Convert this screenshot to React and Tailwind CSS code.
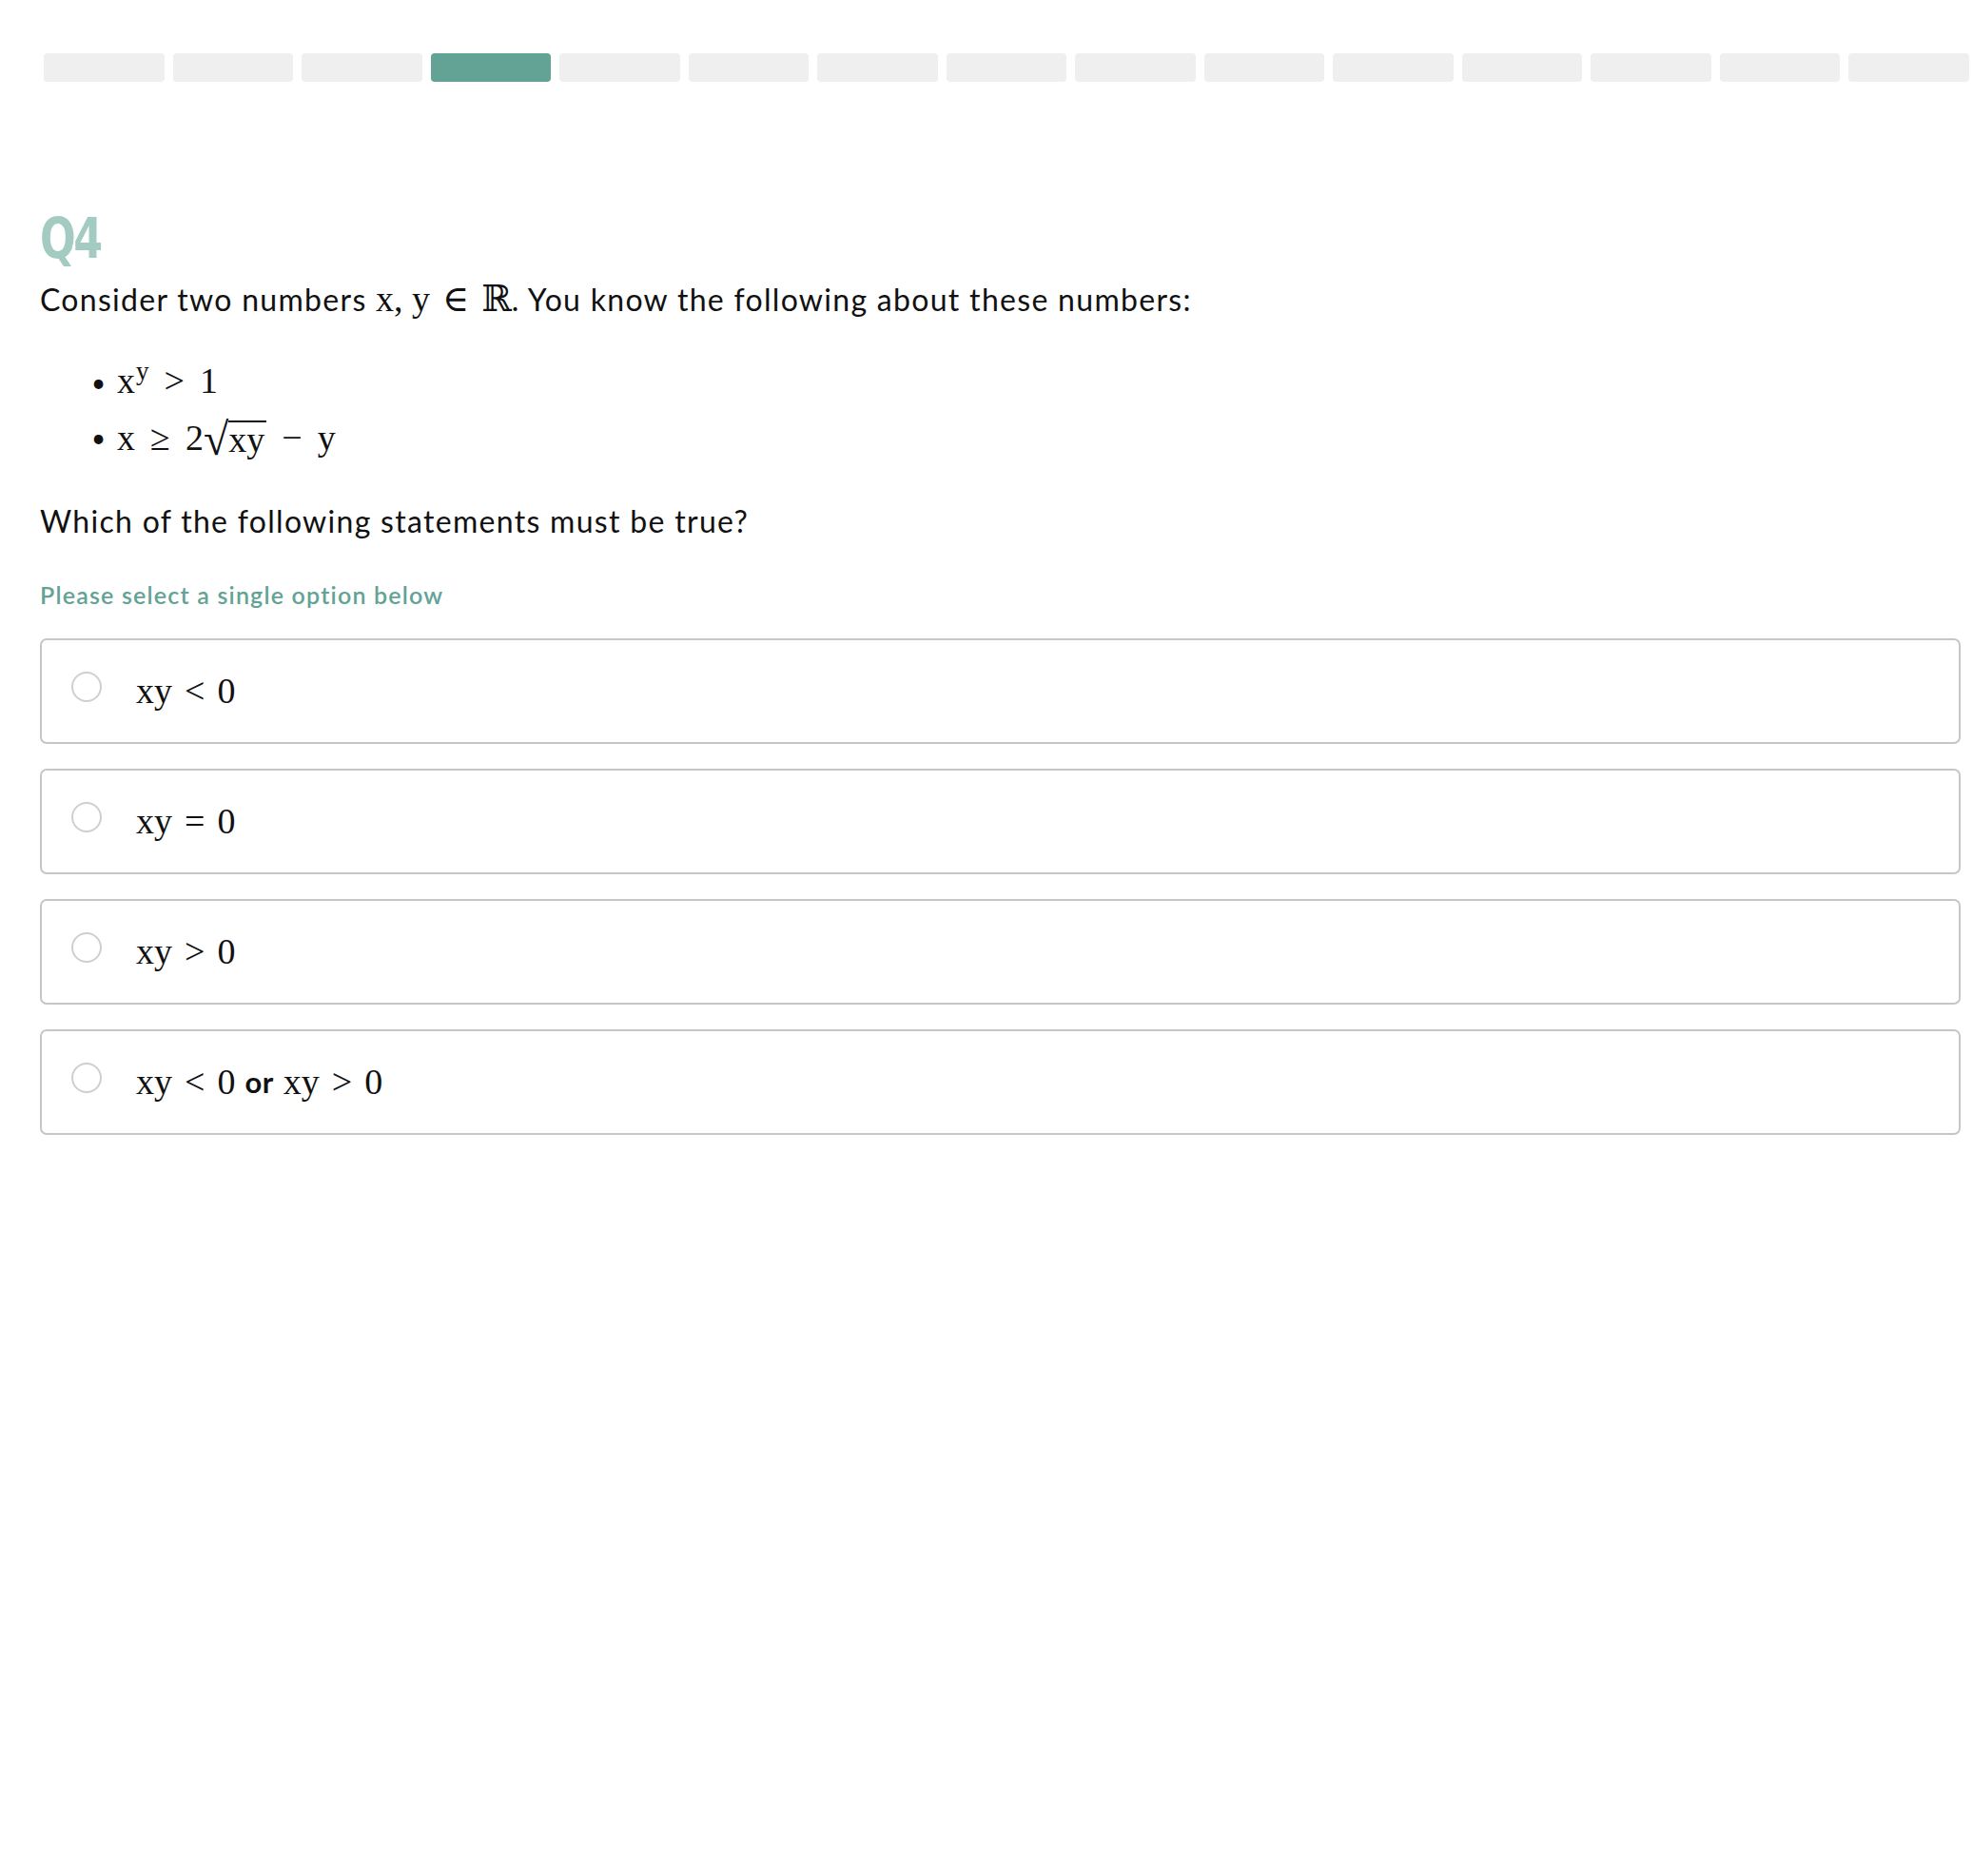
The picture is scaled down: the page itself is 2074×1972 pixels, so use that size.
import React, { useState } from 'react';

const TOTAL_STEPS = 15;
const CURRENT_STEP = 3;

const sans = { fontFamily: 'Lato, "Noto Sans", sans-serif' };

// KaTeX-ish inline math, roman letters in a serif face
function M({ children, className = '' }) {
  return (
    <span className={`font-['Liberation_Serif','DejaVu_Serif',serif] text-[38px] tracking-normal ${className}`}>
      {children}
    </span>
  );
}

function Rel({ children, wide }) {
  return <span className={wide ? 'mx-[16px]' : 'mx-[13px]'}>{children}</span>;
}

const options = [
  { id: 'a', label: <M>xy<Rel>&lt;</Rel>0</M> },
  { id: 'b', label: <M>xy<Rel>=</Rel>0</M> },
  { id: 'c', label: <M>xy<Rel>&gt;</Rel>0</M> },
  {
    id: 'd',
    label: (
      <>
        <M>xy<Rel>&lt;</Rel>0</M>
        <span className="mx-[10px] text-[31px] font-bold tracking-[0.5px]">or</span>
        <M>xy<Rel>&gt;</Rel>0</M>
      </>
    ),
  },
];

export default function App() {
  const [selected, setSelected] = useState(null);

  return (
    <div className="min-h-screen bg-white text-[#111]" style={sans}>
      {/* Progress */}
      <div className="flex gap-[9px] pt-[56px] pl-[46px] pr-[4px]">
        {Array.from({ length: TOTAL_STEPS }).map((_, i) => (
          <div
            key={i}
            className={`h-[30px] flex-1 rounded-[4px] ${i === CURRENT_STEP ? 'bg-[#62a396]' : 'bg-[#efefef]'}`}
          />
        ))}
      </div>

      <div className="pl-[42px] pr-[13px]">
        {/* Question number */}
        <h1 className="mt-[130px] font-['DejaVu_Sans_Condensed','DejaVu_Sans',sans-serif] text-[58px] font-black leading-[70px] tracking-[-3px] text-[#a3cbc2]">
          <span className="inline-block origin-left scale-x-[0.85]">Q4</span>
        </h1>

        {/* Question body */}
        <p className="mt-[4px] text-[32px] leading-[48px] tracking-[1.3px]">
          Consider two numbers <M>x, y<Rel>∈</Rel>ℝ</M>. You know the following about these numbers:
        </p>

        <ul className="mt-[39px] pl-[54px] space-y-[10px]">
          <li className="flex h-[48px] items-center gap-[12px] leading-[48px]">
            <span className="text-[26px]">•</span>
            <M>
              x<span className="relative -top-[14px] ml-[1px] text-[27px]">y</span>
              <Rel wide>&gt;</Rel>1
            </M>
          </li>
          <li className="flex h-[48px] items-center gap-[12px] leading-[48px]">
            <span className="text-[26px]">•</span>
            <M className="flex items-center">
              x<Rel wide>≥</Rel>2
              <span className="inline-flex h-[48px] items-end">
                <span className="relative top-[2px] text-[48px] leading-none">√</span>
                <span className="mb-[4px] border-t-[2px] border-[#111] pr-[2px] leading-[36px]">xy</span>
              </span>
              <Rel wide>−</Rel>y
            </M>
          </li>
        </ul>

        <p className="mt-[40px] text-[32px] leading-[48px] tracking-[1.3px]">Which of the following statements must be true?</p>

        <p className="mt-[37px] text-[25px] font-semibold leading-[32px] tracking-[1.2px] text-[#62a396]">
          Please select a single option below
        </p>

        {/* Options */}
        <div className="mt-[30px] flex flex-col gap-[26px]">
          {options.map((opt) => (
            <label
              key={opt.id}
              className="flex h-[111px] cursor-pointer items-start rounded-[7px] border-2 border-[#c6c6c6] pl-[31px] pt-[33px]"
              onClick={() => setSelected(opt.id)}
            >
              <span
                className={`h-[32px] w-[32px] shrink-0 rounded-full border-2 ${selected === opt.id ? 'border-[#62a396] bg-[#62a396]' : 'border-[#cfcfcf]'}`}
              />
              <span className="ml-[36px] flex items-center leading-[40px]">{opt.label}</span>
            </label>
          ))}
        </div>
      </div>
    </div>
  );
}
